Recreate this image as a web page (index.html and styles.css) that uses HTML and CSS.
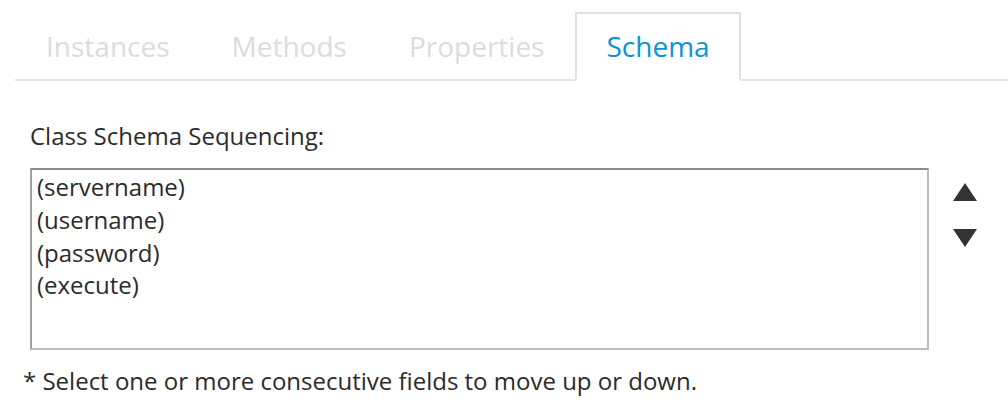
FILE: index.html
```html
<!DOCTYPE html>
<html>
<head>
<meta charset="utf-8">
<link rel="stylesheet" href="styles.css">
</head>
<body>
<div class="page">
  <ul class="tabs">
    <li class="tab">Instances</li>
    <li class="tab">Methods</li>
    <li class="tab">Properties</li>
    <li class="tab active">Schema</li>
  </ul>
  <div class="panel">
    <div class="label">Class Schema Sequencing:</div>
    <div class="row">
      <div class="listbox">
        <div class="item">(servername)</div>
        <div class="item">(username)</div>
        <div class="item">(password)</div>
        <div class="item">(execute)</div>
      </div>
      <div class="arrows">
        <span class="arrow up"></span>
        <span class="arrow down"></span>
      </div>
    </div>
    <div class="note">* Select one or more consecutive fields to move up or down.</div>
  </div>
</div>
</body>
</html>
```
FILE: styles.css
```css
html, body {
  margin: 0;
  padding: 0;
  background: #fff;
}
body {
  font-family: "Open Sans", "Liberation Sans", sans-serif;
  color: #2b2b2b;
}
.page {
  padding: 12px 0 0 15px;
}
.tabs {
  list-style: none;
  margin: 0;
  padding: 0;
  display: flex;
  border-bottom: 2px solid #e4e4e4;
}
.tab {
  font-size: 28px;
  line-height: 40px;
  padding: 12px 29px 13px;
  color: #dcdcdc;
  border: 2px solid transparent;
  margin-bottom: -2px;
}
.tab.active {
  color: #0b93d3;
  background: #fff;
  border-color: #e0e0e0;
  border-bottom-color: #fff;
}
.label {
  font-size: 24px;
  line-height: 34px;
  margin: 38px 0 0 15px;
}
.row {
  display: flex;
  align-items: flex-start;
  margin: 15px 0 0 15px;
}
.listbox {
  box-sizing: border-box;
  width: 899px;
  height: 182px;
  border: 2px solid #bdbdbd;
  border-top-color: #8c8c8c;
  border-left-color: #a2a2a2;
  padding: 1px 5px;
}
.item {
  font-size: 24px;
  line-height: 32.8px;
}
.arrows {
  display: flex;
  flex-direction: column;
  margin: 15px 0 0 24px;
  gap: 28px;
}
.arrow {
  width: 0;
  height: 0;
  border-left: 12px solid transparent;
  border-right: 12px solid transparent;
}
.arrow.up {
  border-bottom: 18px solid #333;
}
.arrow.down {
  border-top: 18px solid #333;
}
.note {
  font-size: 24px;
  line-height: 34px;
  margin: 14px 0 0 8px;
}
```
